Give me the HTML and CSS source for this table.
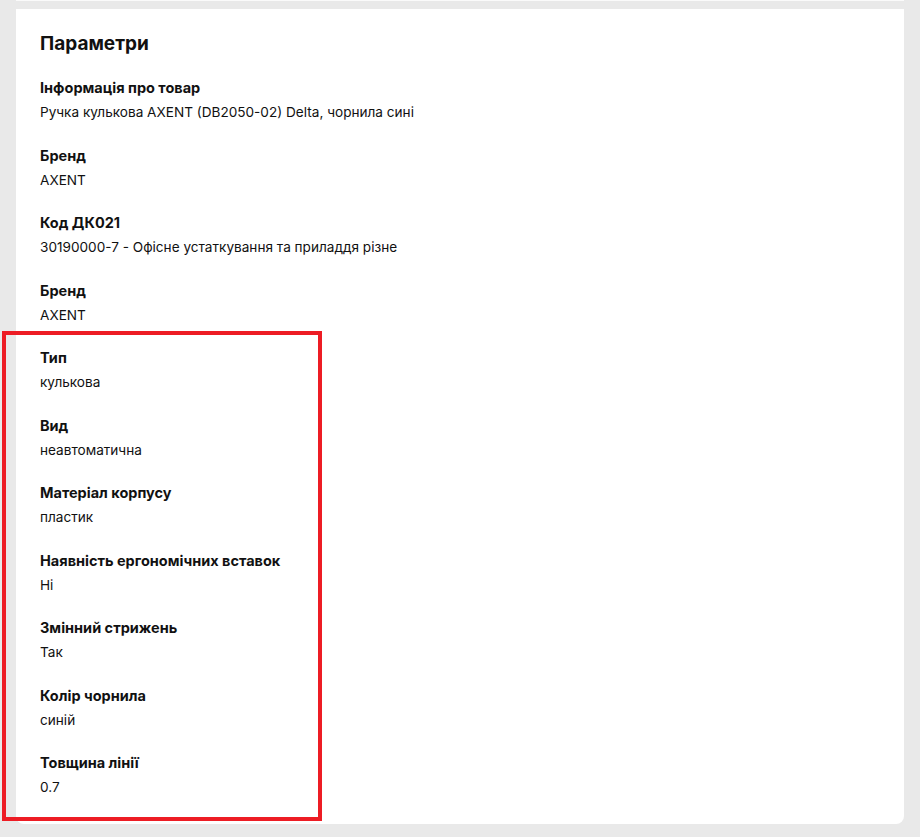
FILE: index.html
```html
<!DOCTYPE html>
<html lang="uk">
<head>
  <meta charset="UTF-8">
  <meta name="viewport" content="width=device-width, initial-scale=1.0">
  <title>Параметри</title>
  <link rel="stylesheet" href="styles.css">
</head>
<body>
  <div class="prev-card"></div>
  <section class="card">
    <h2 class="card-title">Параметри</h2>
    <div class="params">
      <div class="param">
        <div class="param-label">Інформація про товар</div>
        <div class="param-value">Ручка кулькова AXENT (DB2050-02) Delta, чорнила сині</div>
      </div>
      <div class="param">
        <div class="param-label">Бренд</div>
        <div class="param-value">AXENT</div>
      </div>
      <div class="param">
        <div class="param-label">Код ДК021</div>
        <div class="param-value">30190000-7 - Офісне устаткування та приладдя різне</div>
      </div>
      <div class="param">
        <div class="param-label">Бренд</div>
        <div class="param-value">AXENT</div>
      </div>
      <div class="param">
        <div class="param-label">Тип</div>
        <div class="param-value">кулькова</div>
      </div>
      <div class="param">
        <div class="param-label">Вид</div>
        <div class="param-value">неавтоматична</div>
      </div>
      <div class="param">
        <div class="param-label">Матеріал корпусу</div>
        <div class="param-value">пластик</div>
      </div>
      <div class="param">
        <div class="param-label">Наявність ергономічних вставок</div>
        <div class="param-value">Ні</div>
      </div>
      <div class="param">
        <div class="param-label">Змінний стрижень</div>
        <div class="param-value">Так</div>
      </div>
      <div class="param">
        <div class="param-label">Колір чорнила</div>
        <div class="param-value">синій</div>
      </div>
      <div class="param">
        <div class="param-label">Товщина лінії</div>
        <div class="param-value">0.7</div>
      </div>
    </div>
  </section>
  <!-- highlight frame over the pen specs -->
  <div class="highlight"></div>
</body>
</html>
```

FILE: styles.css
```css
body {
  font-family: Inter, 'Noto Sans', sans-serif;
  background: #e9e9e9;
  color: #111;
  margin: 0;
  padding: 0 16px;
  position: relative;
  min-height: 837px;
}
.prev-card {
  height: 1px;
  background: #fafafa;
  margin-bottom: 8px;
}
.card {
  background: #fff;
  border-radius: 0 0 8px 8px;
  padding: 21px 24px 24px;
}
.card-title {
  font-size: 19px;
  font-weight: 700;
  line-height: 28px;
  margin: 0 0 17px;
}
.params {
  display: flex;
  flex-direction: column;
  gap: 17.5px;
}
.param-label {
  font-size: 14.5px;
  font-weight: 700;
  line-height: 25px;
}
.param-value {
  font-size: 13.6px;
  line-height: 25px;
}
.highlight {
  position: absolute;
  left: 2px;
  top: 331px;
  width: 312px;
  height: 482px;
  border: 4px solid #ed1c24;
}
```
